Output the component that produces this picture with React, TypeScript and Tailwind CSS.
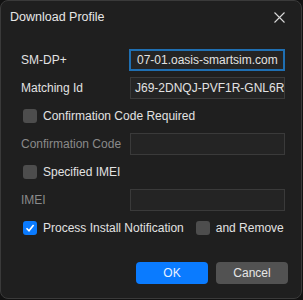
import React from "react";

const FONT = { fontFamily: '"Liberation Sans", Arial, sans-serif' };

function Field({ label, value, dim, focused }: { label: string; value?: string; dim?: boolean; focused?: boolean }) {
  return (
    <div className="flex h-[22px] items-center">
      <span className={`w-[128px] shrink-0 whitespace-nowrap pl-[20px] ${dim ? "text-[#8a8a8a]" : "text-[#e2e2e2]"}`}>
        {label}
      </span>
      <div
        className={`flex h-[22px] shrink-0 items-center overflow-hidden whitespace-nowrap bg-[#242424] text-[#e2e2e2] ${
          focused ? "w-[156px] border-2 border-[#1f6fb2] pl-[6px]" : "ml-[1px] w-[155px] border border-[#3a3a3a] pl-[4px]"
        }`}
      >
        {value}
      </div>
    </div>
  );
}

function Check({ label, checked, className = "" }: { label: string; checked?: boolean; className?: string }) {
  return (
    <div className={`flex shrink-0 items-center gap-[6px] whitespace-nowrap ${className}`}>
      <span
        className={`flex h-[14px] w-[14px] items-center justify-center rounded-[3px] ${
          checked ? "bg-[#0a7bff]" : "bg-[#4d4d4d]"
        }`}
      >
        {checked && (
          <svg width="10" height="10" viewBox="0 0 10 10">
            <path d="M1.5 5.2 L4 7.8 L8.6 2" fill="none" stroke="white" strokeWidth="1.6" />
          </svg>
        )}
      </span>
      <span className="text-[#e2e2e2]">{label}</span>
    </div>
  );
}

export default function App() {
  return (
    <div className="h-[300px] w-[303px] bg-[#121212]" style={FONT}>
      <div className="flex h-[299px] w-[302px] flex-col rounded-[8px] border border-[#3a3a3a] bg-[#1f1f1f] text-[12px]">
        {/* Title bar */}
        <div className="flex h-[32px] items-center justify-between pl-[9px] pr-[16px] pt-[1px]">
          <span className="text-[12.5px] text-[#e6e6e6]">Download Profile</span>
          <svg width="11" height="11" viewBox="0 0 11 11">
            <path d="M0.5 0.5 L10.5 10.5 M10.5 0.5 L0.5 10.5" stroke="#d8d8d8" strokeWidth="1.1" />
          </svg>
        </div>

        <div className="mt-[16px] flex flex-col gap-[6px]">
          <Field label="SM-DP+" value="07-01.oasis-smartsim.com" focused />
          <Field label="Matching Id" value="J69-2DNQJ-PVF1R-GNL6R" />
          <div className="flex h-[22px] items-center">
            <Check label="Confirmation Code Required" className="pl-[22px]" />
          </div>
          <Field label="Confirmation Code" dim />
          <div className="flex h-[22px] items-center">
            <Check label="Specified IMEI" className="pl-[22px]" />
          </div>
          <Field label="IMEI" dim />
          <div className="flex h-[22px] items-center gap-[12px] pl-[22px]">
            <Check label="Process Install Notification" checked />
            <Check label="and Remove" />
          </div>
        </div>

        <div className="mt-[23px] flex justify-end gap-[8px] pr-[13px]">
          <button className="h-[22px] w-[72px] rounded-[4px] bg-[#0a7bff] text-[#e8f1ff]">OK</button>
          <button className="h-[22px] w-[72px] rounded-[4px] bg-[#525252] text-[#e6e6e6]">Cancel</button>
        </div>
      </div>
    </div>
  );
}
